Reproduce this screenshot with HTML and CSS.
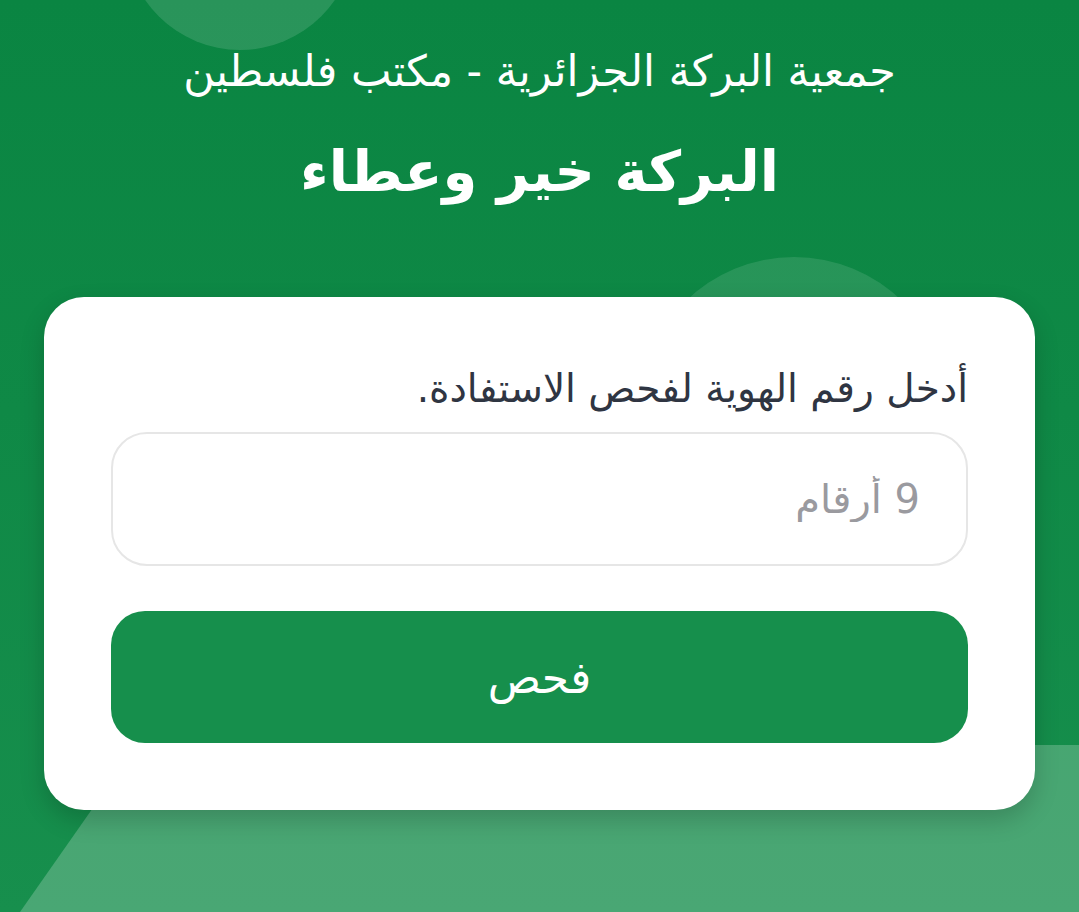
FILE: index.html
```html
<!DOCTYPE html>
<html lang="ar" dir="rtl">
<head>
<meta charset="utf-8">
<title>البركة خير وعطاء</title>
<link rel="stylesheet" href="styles.css">
</head>
<body>
<div class="page">
  <div class="deco deco-top"></div>
  <div class="deco deco-mid"></div>
  <div class="deco deco-bottom"></div>
  <header class="header">
    <p class="org">جمعية البركة الجزائرية - مكتب فلسطين</p>
    <h1 class="title">البركة خير وعطاء</h1>
  </header>
  <main class="card">
    <label class="label" for="id">أدخل رقم الهوية لفحص الاستفادة.</label>
    <input class="field" id="id" type="text" placeholder="9 أرقام">
    <button class="btn" type="button">فحص</button>
  </main>
</div>
</body>
</html>
```

FILE: styles.css
```css
* { box-sizing: border-box; }
html, body { margin: 0; padding: 0; }
body {
  font-family: "DejaVu Sans", "Noto Sans", sans-serif;
  width: 1079px;
  height: 912px;
  overflow: hidden;
}
.page {
  position: relative;
  width: 1079px;
  height: 912px;
  overflow: hidden;
  background: linear-gradient(180deg, #0a8542 0%, #0f8946 45%, #178f4d 100%);
  display: flex;
  flex-direction: column;
  align-items: center;
}
.deco { position: absolute; pointer-events: none; }
.deco-top {
  width: 230px; height: 230px; border-radius: 50%;
  left: 125px; top: -180px;
  background: rgba(255,255,255,0.13);
}
.deco-mid {
  width: 310px; height: 310px; border-radius: 50%;
  left: 639px; top: 257px;
  background: rgba(255,255,255,0.11);
}
.deco-bottom {
  left: 0; top: 745px; width: 1079px; height: 167px;
  background: rgba(255,255,255,0.22);
  clip-path: polygon(137px 0, 1079px 0, 1079px 167px, 20px 167px);
}
.header {
  position: relative;
  text-align: center;
  color: #fff;
  padding-top: 46px;
}
.org {
  margin: 0;
  font-size: 43px;
  line-height: 50px;
  font-weight: 400;
}
.title {
  margin: 41px 0 0;
  font-size: 56px;
  line-height: 70px;
  font-weight: 700;
}
.card {
  position: relative;
  margin-top: 90px;
  width: 991px;
  background: #fff;
  border-radius: 40px;
  box-shadow: 0 10px 24px rgba(0,0,0,0.18);
  padding: 70px 67px 67px;
  display: flex;
  flex-direction: column;
}
.label {
  font-size: 39px;
  line-height: 44px;
  color: #2f3542;
  margin-bottom: 21px;
}
.field {
  height: 134px;
  border: 2px solid #e6e6e6;
  border-radius: 36px;
  padding: 0 46px;
  font-family: inherit;
  font-size: 40px;
  color: #333;
  background: #fff;
  outline: none;
  direction: rtl;
}
.field::placeholder { color: #9a9a9f; }
.btn {
  margin-top: 45px;
  height: 132px;
  border: none;
  border-radius: 34px;
  background: #168f4c;
  color: #fff;
  font-family: inherit;
  font-size: 44px;
}
```
